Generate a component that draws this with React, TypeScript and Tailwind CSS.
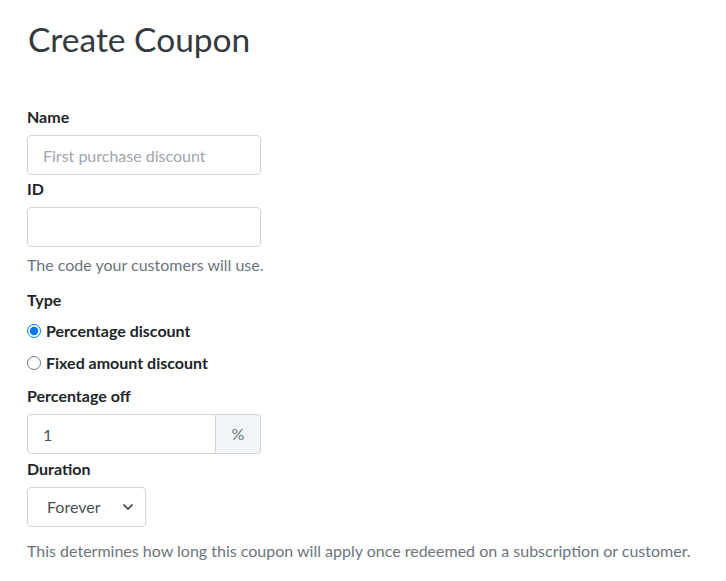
import { ChevronDown } from "lucide-react";

const font = { fontFamily: "Lato, 'Noto Sans', sans-serif" };

const Label = ({ children, className = "mb-[6px]" }: { children: React.ReactNode; className?: string }) => (
  <label className={`block h-6 leading-6 font-bold text-[16px] text-[#212529] ${className}`}>
    {children}
  </label>
);

const App = () => {
  return (
    <div className="min-h-screen bg-white pl-[27px] pt-[17px] text-[#212529]" style={font}>
      <h1 className="pl-px text-[33.5px] leading-[44px] text-[#343a40] font-normal">Create Coupon</h1>

      <form className="mt-[44px] w-[234px]">
        <Label>Name</Label>
        <input
          type="text"
          placeholder="First purchase discount"
          className="block w-full h-10 rounded border border-[#ced4da] px-[15px] text-[16px] text-[#495057] placeholder:text-[#a0a5aa] outline-none"
        />

        <div className="mt-[2px]">
          <Label>ID</Label>
        </div>
        <input
          type="text"
          className="block w-full h-10 rounded border border-[#ced4da] px-[15px] text-[16px] text-[#495057] outline-none"
        />
        <p className="mt-[6px] h-6 leading-6 text-[16px] text-[#6c757d] whitespace-nowrap">
          The code your customers will use.
        </p>

        <div className="mt-[11px]">
          <Label className="mb-[3px]">Type</Label>
        </div>
        <div className="flex flex-col">
          <label className="flex items-center gap-[5px] h-8 font-bold text-[16px]">
            <input type="radio" name="type" defaultChecked className="m-0 w-[14px] h-[14px]" />
            Percentage discount
          </label>
          <label className="flex items-center gap-[5px] h-8 font-bold text-[16px]">
            <input type="radio" name="type" className="m-0 w-[14px] h-[14px]" />
            Fixed amount discount
          </label>
        </div>

        <div className="mt-[5px]">
          <Label>Percentage off</Label>
        </div>
        <div className="flex h-10 w-full">
          <input
            type="text"
            defaultValue="1"
            className="w-[189px] h-full rounded-l border border-[#ced4da] px-[15px] text-[16px] text-[#495057] outline-none"
          />
          <span className="flex-1 flex items-center justify-center rounded-r border border-l-0 border-[#ced4da] bg-[#f1f5f8] text-[16px] text-[#6c757d]">
            %
          </span>
        </div>

        <div className="mt-[3px]">
          <Label>Duration</Label>
        </div>
        <div className="relative w-[119px] h-10">
          <select className="appearance-none w-full h-full rounded border border-[#ced4da] bg-white pl-[19px] pr-8 text-[16px] text-[#495057] outline-none">
            <option>Forever</option>
            <option>Once</option>
            <option>Multiple months</option>
          </select>
          <ChevronDown
            className="pointer-events-none absolute right-[10px] top-1/2 -translate-y-1/2 text-[#343a40]"
            size={16}
            strokeWidth={2.5}
          />
        </div>
        <p className="mt-[12px] h-6 leading-6 text-[16px] text-[#6c757d] whitespace-nowrap">
          This determines how long this coupon will apply once redeemed on a subscription or customer.
        </p>
      </form>
    </div>
  );
};

export default App;
